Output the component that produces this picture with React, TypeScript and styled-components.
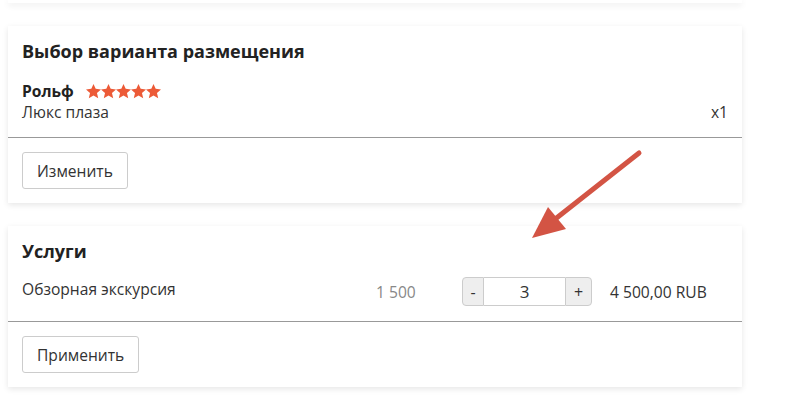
import styled, { createGlobalStyle } from "styled-components";

const GlobalStyle = createGlobalStyle`
  html, body {
    margin: 0;
    padding: 0;
    background: #fff;
  }
  body {
    font-family: "Open Sans", "Liberation Sans", Arial, sans-serif;
    color: #333;
    font-size: 15.6px;
  }
`;

const Page = styled.div`
  position: relative;
  width: 791px;
  height: 404px;
  overflow: hidden;
  display: flex;
  flex-direction: column;
  gap: 23px;
  padding-left: 8px;
  box-sizing: border-box;
`;

const Card = styled.div`
  width: 734px;
  background: #fff;
  box-shadow: 0 2px 6px rgba(0, 0, 0, 0.1);
  flex-shrink: 0;
`;

const CardStub = styled(Card)`
  height: 3px;
`;

const CardBody = styled.div`
  padding: 13px 14px 15px;
  border-bottom: 1px solid #999;
`;

const CardFooter = styled.div`
  padding: 14px;
`;

const Title = styled.h3`
  margin: 0;
  font-size: 18px;
  line-height: 24px;
  font-weight: 700;
  color: #222;
`;

const HotelRow = styled.div`
  display: flex;
  align-items: center;
  gap: 12px;
  margin-top: 17px;
  height: 22px;
`;

const HotelName = styled.span`
  font-weight: 700;
  color: #222;
`;

const Stars = styled.span`
  display: inline-flex;
`;

const RoomRow = styled.div`
  display: flex;
  justify-content: space-between;
  line-height: 20px;
`;

const Button = styled.button`
  font-family: inherit;
  font-size: 15.6px;
  color: #333;
  background: #fff;
  border: 1px solid #ccc;
  border-radius: 3px;
  height: 37px;
  padding: 0 14px;
  cursor: pointer;
`;

const ServiceRow = styled.div`
  display: grid;
  grid-template-columns: 1fr 86px 148px 98px;
  align-items: center;
  margin-top: 14px;
  padding-right: 20px;
`;

const ServiceName = styled.span`
  align-self: start;
  line-height: 24px;
`;

const Price = styled.span`
  color: #888;
`;

const Stepper = styled.div`
  display: flex;
  height: 29px;
  width: 130px;
`;

const StepButton = styled.button<{ $side: "left" | "right" }>`
  font-family: inherit;
  font-size: 16px;
  color: #333;
  background: #eee;
  border: 1px solid #ccc;
  padding: 0;
  width: ${(p) => (p.$side === "left" ? "22px" : "27px")};
  border-radius: ${(p) => (p.$side === "left" ? "4px 0 0 4px" : "0 4px 4px 0")};
`;

const Qty = styled.input`
  font-family: inherit;
  font-size: 17px;
  color: #333;
  width: 81px;
  box-sizing: border-box;
  border: 1px solid #ccc;
  border-left: none;
  border-right: none;
  text-align: center;
  padding: 0;
  outline: none;
`;

const Total = styled.span`
  color: #333;
  white-space: nowrap;
`;

const Annotation = styled.svg`
  position: absolute;
  left: 0;
  top: 0;
  pointer-events: none;
`;

function Star() {
  return (
    <svg width="15" height="15" viewBox="1 1.5 22 21">
      <path
        fill="#ec5a37"
        d="M12 1l3.2 7.1 7.8.8-5.9 5.2 1.8 7.7L12 17.8l-6.9 4 1.8-7.7L1 8.9l7.8-.8z"
      />
    </svg>
  );
}

export default function App() {
  return (
    <>
      <GlobalStyle />
      <Page>
        <CardStub />
        <Card>
          <CardBody>
            <Title>Выбор варианта размещения</Title>
            <HotelRow>
              <HotelName>Рольф</HotelName>
              <Stars>
                {[0, 1, 2, 3, 4].map((i) => (
                  <Star key={i} />
                ))}
              </Stars>
            </HotelRow>
            <RoomRow>
              <span>Люкс плаза</span>
              <span>x1</span>
            </RoomRow>
          </CardBody>
          <CardFooter>
            <Button>Изменить</Button>
          </CardFooter>
        </Card>
        <Card>
          <CardBody>
            <Title>Услуги</Title>
            <ServiceRow>
              <ServiceName>Обзорная экскурсия</ServiceName>
              <Price>1 500</Price>
              <Stepper>
                <StepButton $side="left">-</StepButton>
                <Qty defaultValue="3" />
                <StepButton $side="right">+</StepButton>
              </Stepper>
              <Total>4 500,00 RUB</Total>
            </ServiceRow>
          </CardBody>
          <CardFooter>
            <Button>Применить</Button>
          </CardFooter>
        </Card>
        <Annotation width="791" height="404">
          <line
            x1="639"
            y1="153"
            x2="554"
            y2="220"
            stroke="#d35444"
            strokeWidth="5"
            strokeLinecap="round"
          />
          <polygon points="532,238 548,207 566,229" fill="#d35444" />
        </Annotation>
      </Page>
    </>
  );
}
